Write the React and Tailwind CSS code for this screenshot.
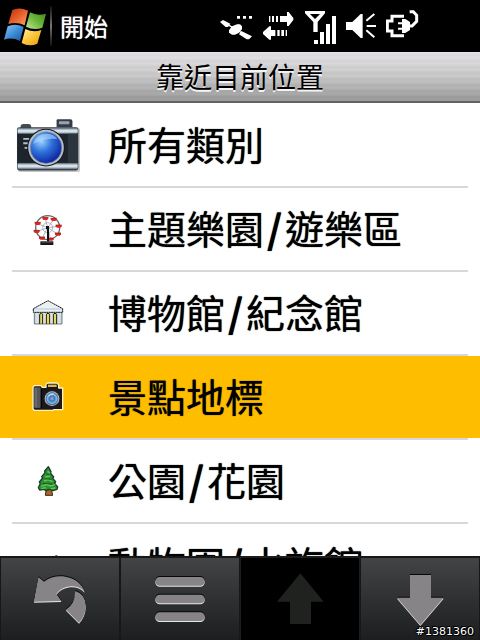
import React, { useState } from 'react';
import clsx from 'clsx';

const WindowsFlag = () => (
  <svg viewBox="0 0 150 150" className="h-[50px] w-[50px]" aria-hidden="true">
    <defs>
      <linearGradient id="flagRed" x1="0" y1="0" x2="1" y2="1">
        <stop offset="0" stopColor="#b5300c" />
        <stop offset="0.5" stopColor="#e8602c" />
        <stop offset="1" stopColor="#f9a868" />
      </linearGradient>
      <linearGradient id="flagGreen" x1="1" y1="0" x2="0" y2="1">
        <stop offset="0" stopColor="#3f8a1c" />
        <stop offset="0.5" stopColor="#6cb83a" />
        <stop offset="1" stopColor="#c3e89a" />
      </linearGradient>
      <linearGradient id="flagBlue" x1="0" y1="0" x2="1" y2="1">
        <stop offset="0" stopColor="#8cc8f4" />
        <stop offset="0.5" stopColor="#3f8fd8" />
        <stop offset="1" stopColor="#1a4f9c" />
      </linearGradient>
      <linearGradient id="flagYellow" x1="0" y1="0" x2="1" y2="1">
        <stop offset="0" stopColor="#fff0a0" />
        <stop offset="0.5" stopColor="#fdc43a" />
        <stop offset="1" stopColor="#e89a10" />
      </linearGradient>
    </defs>
    <path d="M37 27Q58 17 84 29L74 73Q50 61 25 69Z" fill="url(#flagRed)" />
    <path d="M90 34Q112 46 138 38L127 80Q102 90 78 77Z" fill="url(#flagGreen)" />
    <path d="M23 76Q47 66 71 78L60 120Q36 108 12 116Z" fill="url(#flagBlue)" />
    <path d="M76 84Q101 96 124 87L112 128Q88 138 65 126Z" fill="url(#flagYellow)" />
  </svg>
);

const SatelliteIcon = () => (
  <svg viewBox="60 27 99 105" className="h-[35px] w-[33px]" fill="#fff" aria-hidden="true">
    <path d="M111 48h9v8h-9zM129 48h9v8h-9zM147 48h9v8h-9z" />
    <path d="M60 66L69 60L91 71L84 81H77ZM87 91L96 79L111 73H120L126 79V88L116 99L105 104H96L87 98ZM117 103L124 93L156 109L147 118H140Z" />
    <path d="M84 74l14 9M116 92l8 6" stroke="#fff" strokeWidth="4" />
  </svg>
);

const TransferIcon = () => (
  <svg viewBox="186 27 93 105" className="h-[35px] w-[31px]" fill="#fff" aria-hidden="true">
    <path d="M204 48h4v18h-4zM213 48h6v18h-6zM225 48h6v18h-6zM237 48h21V36h5l14 18v6l-14 18h-5V66h-21z" />
    <path d="M258 90h-4v18h4zM249 90h-8v18h8zM236 90h-7v18h7zM223 90h-13V79h-5l-19 17v6l19 17h5v-11h13z" />
  </svg>
);

const SignalIcon = () => (
  <svg viewBox="312 27 96 105" className="h-[35px] w-[32px]" fill="#fff" aria-hidden="true">
    <path
      fillRule="evenodd"
      d="M315 33h60v7l-22 26v30h-13V66l-25-26zM330 42l15 15 15-15z"
    />
    <path d="M342 120h12v12h-12zM360 96h12v36h-12zM378 72h12v60h-12zM396 48h12v84h-12z" />
  </svg>
);

const SpeakerIcon = () => (
  <svg viewBox="438 27 90 105" className="h-[35px] w-[30px]" fill="#fff" aria-hidden="true">
    <path d="M438 66h19l25-24h6v72h-6l-25-24h-19z" />
    <path d="M499 62l24-20M500 78h28M499 91l24 21" fill="none" stroke="#fff" strokeWidth="6" />
  </svg>
);

const PlugIcon = () => (
  <svg viewBox="558 27 99 105" className="h-[35px] w-[33px]" fill="none" stroke="#fff" aria-hidden="true">
    <path d="M612 49h-36v14h-14v30h14v14h36" strokeWidth="9" />
    <path d="M594 70h18M594 86h18" strokeWidth="6" />
    <path d="M606 57h10l14 9v24l-14 9h-10z" fill="#fff" stroke="none" />
    <path d="M626 78h10l14-14V46l-10-11h-11" strokeWidth="9" />
  </svg>
);

const BigCamera = () => (
  <svg viewBox="45 48 200 168" className="h-[56px] w-[66px]" aria-hidden="true">
    <defs>
      <linearGradient id="camMetal" x1="0" y1="0" x2="0" y2="1">
        <stop offset="0" stopColor="#7b8a96" />
        <stop offset="0.5" stopColor="#e8f2f8" />
        <stop offset="1" stopColor="#8796a4" />
      </linearGradient>
      <radialGradient id="camLens" cx="0.35" cy="0.3" r="0.75">
        <stop offset="0" stopColor="#9fd4ff" />
        <stop offset="0.45" stopColor="#2f72dc" />
        <stop offset="1" stopColor="#0a1f9a" />
      </radialGradient>
    </defs>
    <rect x="54" y="80" width="188" height="134" rx="8" fill="#c8c8c8" />
    <path d="M62 76q0-8 8-8h16q8 0 8 8v6H62z" fill="#444b52" />
    <path d="M171 78V58q0-4 4-4h38q6 0 6 6v18z" fill="#343b45" />
    <rect x="178" y="60" width="32" height="9" rx="2" fill="#9aa5b2" />
    <rect x="51" y="78" width="186" height="131" rx="7" fill="#39424c" />
    <rect x="53" y="81" width="182" height="17" rx="4" fill="url(#camMetal)" />
    <rect x="52" y="98" width="184" height="88" fill="#1e242c" />
    <rect x="205" y="98" width="31" height="88" fill="#2c343e" />
    <rect x="53" y="187" width="182" height="17" rx="3" fill="url(#camMetal)" />
    <path d="M70 111h18v5H70zM70 124h14v6H70zM74 138h12v5H74z" fill="#b4bdc6" />
    <circle cx="139" cy="140" r="57" fill="#15191f" />
    <circle cx="139" cy="140" r="54" fill="#b9c0ca" />
    <circle cx="139" cy="140" r="48" fill="url(#camLens)" stroke="#8c97aa" strokeWidth="2" />
    <path d="M101 128q8-28 38-30 24 0 34 16-34-4-72 14z" fill="#b8e0ff" opacity="0.55" />
  </svg>
);

const cars = [
  [136, 55], [161, 58], [176, 78], [174, 102], [152, 117], [126, 114], [110, 94], [113, 70],
];

const FerrisWheel = () => (
  <svg viewBox="93 35 102 105" className="h-[35px] w-[34px]" aria-hidden="true">
    <circle cx="143" cy="82" r="36" fill="none" stroke="#66666c" strokeWidth="4" />
    <circle cx="143" cy="82" r="15" fill="none" stroke="#b4b8c4" strokeWidth="3" />
    {cars.map(([x, y]) => (
      <path key={`spoke-${x}`} d={`M143 82L${x} ${y}`} stroke="#8a8fa0" strokeWidth="2" />
    ))}
    {cars.map(([x, y]) => (
      <g key={`car-${x}`}>
        <path d={`M${x - 9} ${y - 4}h18v4l-4 4h-10l-4-4z`} fill="#e3231c" />
        <path d={`M${x - 9} ${y - 4}h18`} stroke="#7e1712" strokeWidth="2" />
      </g>
    ))}
    <path d="M138 77h9v46h-6V86h-3z" fill="#101018" />
    <rect x="121" y="123" width="39" height="11" fill="#15151a" />
    <path d="M124 127h33" stroke="#55555c" strokeWidth="2" />
  </svg>
);

const Museum = () => (
  <svg viewBox="93 35 102 105" className="h-[35px] w-[34px]" aria-hidden="true">
    <rect x="103" y="84" width="83" height="35" fill="#c4d5dc" />
    <path d="M118 86h52v33h-52z" fill="#dcd285" />
    <path
      d="M119 119V90q5-7 9 0v29M139 119V90q5-7 10 0v29M160 119V90q5-7 10 0v29"
      fill="#e7d565"
      stroke="#15171a"
      strokeWidth="3"
    />
    <path d="M130 86h7v33h-7zM151 86h7v33h-7zM107 86h9v33h-9zM173 86h9v33h-9z" fill="#d3e2e8" />
    <path d="M100 73L144 49l44 24v11h-88z" fill="#e9f1f6" stroke="#16181b" strokeWidth="3" strokeDasharray="6 1" />
    <path d="M102 74h84" stroke="#9fb0ba" strokeWidth="2" />
    <path d="M103 84v35h83V84" fill="none" stroke="#3c4348" strokeWidth="2" />
  </svg>
);

const Camera = () => (
  <svg viewBox="93 35 102 105" className="h-[35px] w-[34px]" aria-hidden="true">
    <defs>
      <radialGradient id="slrLens" cx="0.5" cy="0.5" r="0.5">
        <stop offset="0" stopColor="#c3a0e8" />
        <stop offset="0.4" stopColor="#3b78b8" />
        <stop offset="0.75" stopColor="#78c4e4" />
        <stop offset="1" stopColor="#3a4a88" />
      </radialGradient>
    </defs>
    <path
      d="M99 57l4-5h20l4 5h11V48l4-4h29l5 5v10h12v65h-26l-4 2h-55l-4-4z"
      fill="#1a191a"
      stroke="#fff3c4"
      strokeWidth="4"
      strokeLinejoin="round"
    />
    <rect x="144" y="49" width="26" height="7" fill="#d9b24a" />
    <rect x="102" y="57" width="20" height="62" rx="4" fill="#55565a" />
    <path d="M108 60v56" stroke="#737478" strokeWidth="4" />
    <path d="M124 62v56" stroke="#000" strokeWidth="3" />
    <circle cx="156" cy="91" r="25" fill="#27222b" />
    <circle cx="156" cy="91" r="22" fill="#bdbac4" />
    <circle cx="156" cy="91" r="19" fill="url(#slrLens)" />
    <path d="M145 84q6-9 16-7" stroke="#d9f4ff" strokeWidth="3" fill="none" />
  </svg>
);

const Tree = () => (
  <svg viewBox="93 30 102 105" className="h-[35px] w-[34px]" aria-hidden="true">
    <path d="M139 104h15l4 20h-22z" fill="#ac642c" stroke="#3c2412" strokeWidth="3" />
    <path
      d="M145 38l8 15-1 5 9 11-3 4 9 10-3 5 9 11-2 7-12 4-12-4-8 4-8-4-12 2-4-7 6-13-3-4 10-12-3-4 10-12-1-5z"
      fill="#2f8f35"
      stroke="#173f2a"
      strokeWidth="4"
      strokeLinejoin="round"
    />
    <path
      d="M143 52l7 5M136 69l14-3M132 81l12-4 14 6M124 97l15-5 13 4 14-4M124 104l14-3M152 104l14-2"
      fill="none"
      stroke="#62cc4c"
      strokeWidth="4"
    />
    <path d="M139 60l10 3M134 74l20 2M128 88l14 1 16 1" fill="none" stroke="#1a5c2c" strokeWidth="3" />
  </svg>
);

const Animal = () => (
  <svg viewBox="93 35 102 105" className="h-[35px] w-[34px]" aria-hidden="true">
    <path d="M158 63l6-3 4-4 6 3 6 6v40h-50V70z" fill="#2b2b2b" />
  </svg>
);

const categories = [
  { id: 'all', parts: ['所有類別'], Icon: BigCamera },
  { id: 'theme', parts: ['主題樂園', '遊樂區'], Icon: FerrisWheel },
  { id: 'museum', parts: ['博物館', '紀念館'], Icon: Museum },
  { id: 'landmark', parts: ['景點地標'], Icon: Camera },
  { id: 'park', parts: ['公園', '花園'], Icon: Tree },
  { id: 'zoo', parts: ['動物園', '水族館'], Icon: Animal },
];

// Every toolbar glyph has a dark top edge and a light bottom edge
const Embossed = ({ d }) => (
  <svg viewBox="90 120 180 168" className="h-[56px] w-[60px]" aria-hidden="true">
    <path d={d} fill="#080808" transform="translate(0 -3)" />
    <path d={d} fill="#e6e6e6" transform="translate(0 3)" />
    <path d={d} fill="#878488" />
  </svg>
);

const BACK =
  'M116 139L132 152Q156 134 188 136Q238 142 254 182Q236 164 210 166Q182 170 169 189L184 210L102 212ZM225 180Q256 188 257 225Q257 254 237 275L198 236Q228 216 225 180Z';
const MENU =
  'M119 138H241a13 13 0 0 1 0 26H119a13 13 0 0 1 0-26ZM119 191H241a13 13 0 0 1 0 26H119a13 13 0 0 1 0-26ZM119 244H241a13 13 0 0 1 0 26H119a13 13 0 0 1 0-26Z';
const DOWN = 'M150 132H213V200H251L181 282L111 200H150Z';

const toolButton =
  'flex flex-1 items-center justify-center border-x border-t-2 border-[#161719] bg-linear-to-b from-[#424446] to-[#1d1e20]';

const Toolbar = () => (
  <nav className="relative flex h-[84px] shrink-0 bg-[#1c1d1f]">
    <button type="button" aria-label="返回" className={toolButton}>
      <Embossed d={BACK} />
    </button>
    <button type="button" aria-label="選單" className={toolButton}>
      <Embossed d={MENU} />
    </button>
    <button
      type="button"
      aria-label="上一頁"
      disabled
      className="flex flex-1 items-center justify-center border-x border-t-2 border-[#1c1c1e] bg-black"
    >
      <svg viewBox="90 120 180 168" className="h-[56px] w-[60px]" aria-hidden="true">
        <path d="M181 127L251 212H213V279H150V212H111Z" fill="#20221f" />
      </svg>
    </button>
    <button type="button" aria-label="下一頁" className={toolButton}>
      <Embossed d={DOWN} />
    </button>
    <span className="absolute right-[6px] bottom-0 font-['DejaVu_Sans'] text-[11px] leading-4 text-white [text-shadow:1px_0_#000,-1px_0_#000,0_1px_#000,0_-1px_#000,1px_1px_#000,-1px_-1px_#000]">
      #1381360
    </span>
  </nav>
);

const App = () => {
  const [selected, setSelected] = useState('landmark');

  return (
    <div className="flex h-screen w-full flex-col overflow-hidden bg-white font-['Noto_Sans_CJK_TC',sans-serif]">
      {/* Status bar */}
      <header className="flex h-[52px] shrink-0 items-center justify-between bg-black pr-[61px]">
        <button type="button" className="flex items-center text-white">
          <WindowsFlag />
          <span className="h-10 w-[2px] bg-linear-to-b from-[#111] via-[#777] to-[#111]" />
          <span className="ml-2 text-[24px] leading-8 font-normal [text-shadow:0_0_1px_#fff]">開始</span>
        </button>
        <div className="flex gap-[10px]">
          <SatelliteIcon />
          <TransferIcon />
          <SignalIcon />
          <SpeakerIcon />
          <PlugIcon />
        </div>
      </header>

      {/* Brushed metal title */}
      <div className="flex h-[51px] shrink-0 justify-center border-b-2 border-[#626262] bg-[repeating-linear-gradient(180deg,rgba(255,255,255,0.06)_0px,rgba(0,0,0,0.03)_3px,rgba(255,255,255,0.06)_6px),linear-gradient(180deg,#e6e4e6,#c8c7c8_50%,#979797)]">
        <h1 className="pt-1 text-[28px] leading-10 text-black [text-shadow:0_2px_#f4f4f4]">靠近目前位置</h1>
      </div>

      <ul className="min-h-0 flex-1 overflow-hidden pt-px">
        {categories.map(({ id, parts, Icon }) => (
          <li key={id} className={clsx('h-[84px]', id === selected && 'bg-[#ffbd00]')}>
            <button
              type="button"
              onClick={() => setSelected(id)}
              className="flex h-full w-full flex-col text-left text-black"
            >
              <span className="flex w-full flex-1 items-center">
                <span className="flex w-24 shrink-0 justify-center">
                  <Icon />
                </span>
                <span className="ml-3 flex items-center pb-1 text-[39px] leading-[56px] font-normal whitespace-nowrap [text-shadow:0_0_1px_#000]">
                  {parts[0]}
                  {parts[1] && (
                    <>
                      <span className="mx-[3px] font-bold">/</span>
                      {parts[1]}
                    </>
                  )}
                </span>
              </span>
              <span className={clsx('block w-full px-3', id === selected && 'bg-white')}>
                <span className="block h-[2px] bg-[#d8d8d8]" />
              </span>
            </button>
          </li>
        ))}
      </ul>

      <Toolbar />
    </div>
  );
};

export default App;
